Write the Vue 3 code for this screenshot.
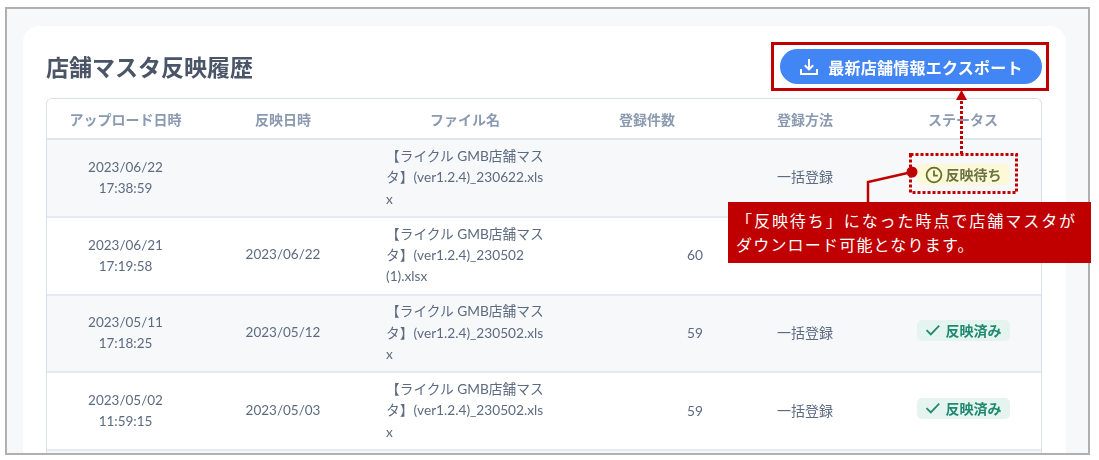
<script setup>
const headers = ['アップロード日時', '反映日時', 'ファイル名', '登録件数', '登録方法', 'ステータス']
const rows = [
  { up: ['2023/06/22', '17:38:59'], at: '', file: ['【ライクル GMB店舗マス', 'タ】(ver1.2.4)_230622.xls', 'x'], count: '', method: '一括登録', status: 'wait' },
  { up: ['2023/06/21', '17:19:58'], at: '2023/06/22', file: ['【ライクル GMB店舗マス', 'タ】(ver1.2.4)_230502', '(1).xlsx'], count: '60', method: '', status: '' },
  { up: ['2023/05/11', '17:18:25'], at: '2023/05/12', file: ['【ライクル GMB店舗マス', 'タ】(ver1.2.4)_230502.xls', 'x'], count: '59', method: '一括登録', status: 'done' },
  { up: ['2023/05/02', '11:59:15'], at: '2023/05/03', file: ['【ライクル GMB店舗マス', 'タ】(ver1.2.4)_230502.xls', 'x'], count: '59', method: '一括登録', status: 'done' },
]
</script>

<template>
  <div class="page">
    <div class="frame">
      <section class="card">
        <header class="head">
          <h1>店舗マスタ反映履歴</h1>
          <button class="export">
            <svg width="20" height="20" viewBox="0 0 20 20" fill="none" stroke="#fff" stroke-width="2">
              <path d="M10 2v10M5.8 8.2 10 12.4l4.2-4.2" />
              <path d="M2 12v5h16v-5" />
            </svg>
            最新店舗情報エクスポート
          </button>
        </header>
        <div class="table-box">
          <table>
            <colgroup>
              <col class="a" /><col class="c" /><col class="w" /><col class="c" /><col class="c" /><col class="c" />
            </colgroup>
            <thead>
              <tr><th v-for="h in headers" :key="h">{{ h }}</th></tr>
            </thead>
            <tbody>
              <tr v-for="(r, i) in rows" :key="i">
                <td class="up"><div v-for="l in r.up" :key="l">{{ l }}</div></td>
                <td class="date">{{ r.at }}</td>
                <td class="file"><div v-for="l in r.file" :key="l">{{ l }}</div></td>
                <td class="num">{{ r.count }}</td>
                <td>{{ r.method }}</td>
                <td>
                  <div class="status">
                    <span v-if="r.status === 'wait'" class="badge wait">
                      <svg width="18" height="18" viewBox="0 0 18 18" fill="none" stroke="#66702a" stroke-width="1.8">
                        <circle cx="9" cy="9" r="7.4" />
                        <path d="M9 4.6V9.6h3.8" />
                      </svg>
                      反映待ち
                    </span>
                    <span v-else-if="r.status === 'done'" class="badge done">
                      <svg width="16" height="12" viewBox="0 0 16 12" fill="none" stroke="#1f8a70" stroke-width="1.8">
                        <path d="M1.5 6.2 5.8 10.4 14.2 1.6" />
                      </svg>
                      反映済み
                    </span>
                  </div>
                </td>
              </tr>
            </tbody>
          </table>
        </div>
      </section>
    </div>

    <svg class="notes" width="1099" height="460" viewBox="0 0 1099 460" fill="none">
      <rect x="772.5" y="43.5" width="275" height="46" stroke="#c00000" stroke-width="3" />
      <rect x="910.5" y="154.5" width="106" height="38" stroke="#c00000" stroke-width="3" stroke-dasharray="3 2" />
      <path d="M961.5 154V99" stroke="#c00000" stroke-width="3" stroke-dasharray="3 2" />
      <path d="M961.5 90 956 100h11z" fill="#c00000" />
      <path d="M912 172 868 182V204" stroke="#c00000" stroke-width="2.5" />
      <circle cx="912" cy="172" r="5.5" fill="#c00000" />
    </svg>
    <div class="callout">
      <div class="l1">「反映待ち」になった時点で店舗マスタが</div>
      <div class="l2">ダウンロード可能となります。</div>
    </div>
  </div>
</template>

<style scoped>
.page {
  position: relative;
  width: 1099px;
  height: 460px;
  overflow: hidden;
  background: #fff;
  padding: 7px 9px 5px 5px;
  box-sizing: border-box;
  font-family: Lato, "Noto Sans CJK JP", sans-serif;
}
.frame {
  height: 448px;
  box-sizing: border-box;
  border: 2px solid #b0b0b0;
  background: #f7f8fa;
  padding: 17px 22px 0 16px;
  overflow: hidden;
  filter: blur(0.3px);
}
.card {
  height: 429px;
  box-sizing: border-box;
  background: #fff;
  border-radius: 16px 16px 0 0;
  padding: 23px 24px 0 23px;
}
.head {
  display: flex;
  justify-content: space-between;
  align-items: center;
  height: 35px;
  margin-bottom: 14px;
}
h1 {
  margin: 0;
  font-size: 23px;
  font-weight: 700;
  color: #4a5568;
  padding-top: 1px;
  line-height: 35px;
}
.export {
  display: flex;
  align-items: center;
  justify-content: center;
  gap: 9px;
  width: 262px;
  height: 35px;
  border: 0;
  border-radius: 18px;
  background: #4285f4;
  color: #fff;
  font: 700 16px Lato, "Noto Sans CJK JP", sans-serif;
  letter-spacing: 0.25px;
  padding: 0;
}
.table-box {
  box-sizing: border-box;
  border: 1px solid #d9e0ec;
  border-bottom: 0;
  border-radius: 6px 6px 0 0;
  height: 357px;
  background: #f7f8fa;
  overflow: hidden;
}
table {
  width: 995px;
  table-layout: fixed;
  border-collapse: separate;
  border-spacing: 0;
  font-size: 14px;
  color: #5c6b82;
  background: #fff;
}
.a { width: 157px; }
.c { width: 158px; }
.w { width: 206px; }
th {
  height: 39px;
  padding: 0;
  font-weight: 700;
  font-size: 14px;
  color: #8b9ab1;
  border-bottom: 2px solid #e0e6f0;
  text-align: center;
}
td {
  height: 73.75px;
  padding: 0 0 2px;
  line-height: 21px;
  text-align: center;
  border-bottom: 2px solid #e4e9f2;
}
tbody tr:nth-child(odd) td { background: #f7f8fa; }
td.up {
  height: 75.75px;
  padding-bottom: 0;
  font-size: 13.5px;
}
.date { font-size: 13.5px; }
.file {
  text-align: left;
  padding-left: 24px;
  white-space: nowrap;
  font-size: 13.7px;
  line-height: 21.4px;
}
.num {
  text-align: right;
  padding-right: 23px;
  font-size: 13.7px;
}
.status {
  display: flex;
  justify-content: center;
  margin-bottom: 4px;
}
.badge {
  display: flex;
  align-items: center;
  justify-content: center;
  gap: 3px;
  width: 93px;
  height: 21px;
  border-radius: 5px;
  font-size: 14px;
  font-weight: 700;
}
.wait { background: #fdf8d8; color: #6b7340; }
.done { background: #e6f4ef; color: #1f8a70; gap: 5px; }
.notes {
  position: absolute;
  left: 0;
  top: 0;
}
.callout {
  position: absolute;
  left: 728px;
  top: 202px;
  width: 363px;
  height: 61px;
  box-sizing: border-box;
  padding: 6px 0 0 8px;
  background: #c00000;
  color: #fff;
  font-size: 16px;
  line-height: 24px;
  white-space: nowrap;
  font-family: "Noto Sans CJK JP", sans-serif;
}
.l1 { letter-spacing: 1.95px; }
.l2 { letter-spacing: 1.2px; }
</style>
